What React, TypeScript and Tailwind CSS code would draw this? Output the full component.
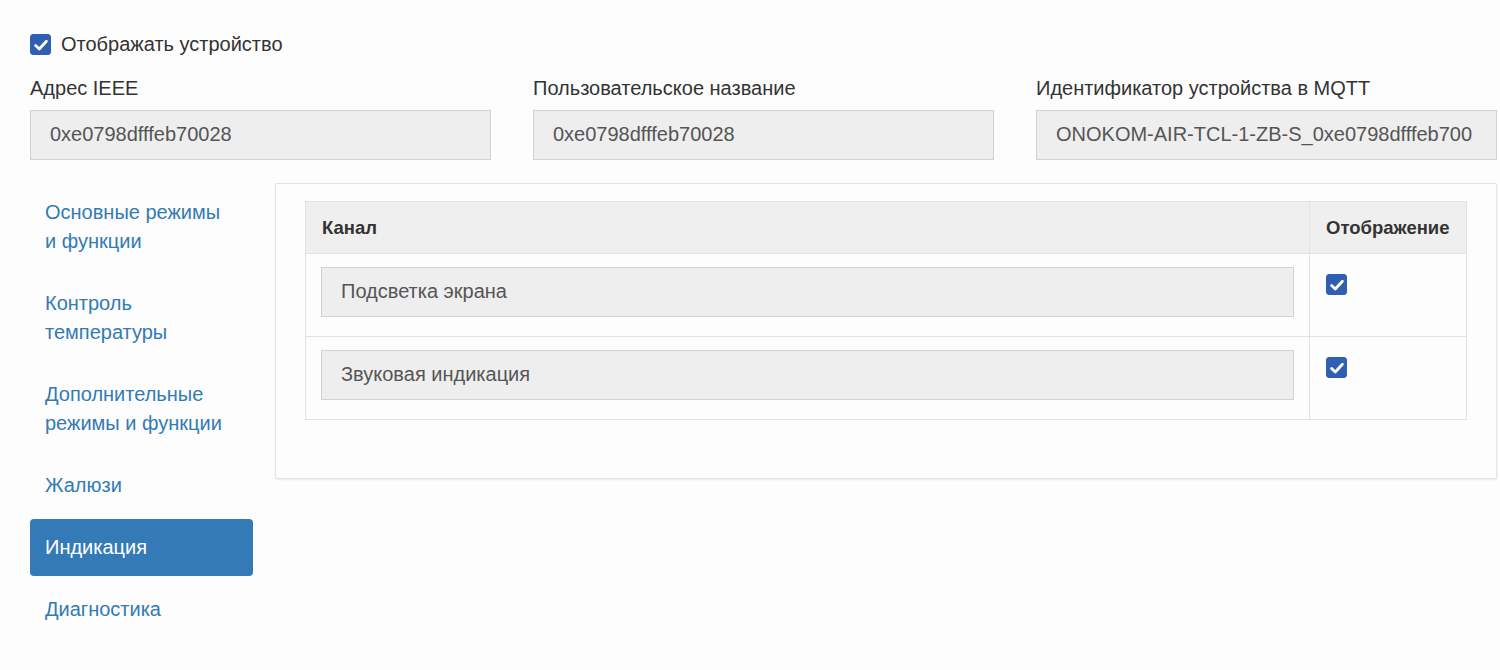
import { useState } from 'react'

const font = { fontFamily: '"Liberation Sans", Arial, sans-serif' }

function Check({ checked, onChange }: { checked: boolean; onChange: () => void }) {
  return (
    <button
      type="button"
      onClick={onChange}
      className={`flex h-[21px] w-[21px] shrink-0 items-center justify-center rounded-[3px] border ${checked ? 'border-[#2e5fb3] bg-[#2e5fb3]' : 'border-[#767676] bg-white'}`}
    >
      {checked && (
        <svg width="16" height="16" viewBox="0 0 16 16" fill="none">
          <path d="M2.6 8.4 6.3 12 13.4 4.2" stroke="white" strokeWidth="2.8" strokeLinecap="round" strokeLinejoin="round" />
        </svg>
      )}
    </button>
  )
}

// the MQTT id is longer than its box; only the visible part is shown, as in the reference
const fields = [
  { label: 'Адрес IEEE', value: '0xe0798dfffeb70028' },
  { label: 'Пользовательское название', value: '0xe0798dfffeb70028' },
  { label: 'Идентификатор устройства в MQTT', value: 'ONOKOM-AIR-TCL-1-ZB-S_0xe0798dfffeb700' },
]

const tabs = [
  'Основные режимы и функции',
  'Контроль температуры',
  'Дополнительные режимы и функции',
  'Жалюзи',
  'Индикация',
  'Диагностика',
]

export default function App() {
  const [visible, setVisible] = useState(true)
  const [active, setActive] = useState(4)
  const [channels, setChannels] = useState([
    { name: 'Подсветка экрана', on: true },
    { name: 'Звуковая индикация', on: true },
  ])

  return (
    <div style={font} className="min-h-[670px] w-[1500px] overflow-hidden bg-[#fdfdfd] pl-[30px] pr-[3px] pt-[30px] text-[20px] leading-[29px] text-[#333]">
      <label className="flex items-center gap-[10px]">
        <Check checked={visible} onChange={() => setVisible(!visible)} />
        <span>Отображать устройство</span>
      </label>

      <div className="mt-[15px] grid grid-cols-3 gap-[42px]">
        {fields.map((f) => (
          <div key={f.label}>
            <div className="mb-[7px] h-[29px]">{f.label}</div>
            <div className="h-[50px] border border-[#d2d2d2] bg-[#eee] px-[19px] py-[9px] text-[#555]">
              <div className="overflow-hidden whitespace-nowrap">{f.value}</div>
            </div>
          </div>
        ))}
      </div>

      <div className="mt-[23px] flex gap-[22px]">
        <ul className="flex w-[223px] shrink-0 flex-col gap-[5px] pt-[1px]">
          {tabs.map((t, i) => (
            <li key={t}>
              <button
                type="button"
                onClick={() => setActive(i)}
                className={`w-full rounded-[4px] px-[15px] py-[14px] text-left ${i === active ? 'bg-[#337ab7] text-white' : 'text-[#337ab7]'}`}
              >
                {t === 'Основные режимы и функции' ? (
                  <>Основные режимы<br />и функции</>
                ) : t === 'Дополнительные режимы и функции' ? (
                  <>Дополнительные<br />режимы и функции</>
                ) : t === 'Контроль температуры' ? (
                  <>Контроль<br />температуры</>
                ) : (
                  t
                )}
              </button>
            </li>
          ))}
        </ul>

        <div className="h-[296px] flex-1 rounded-[2px] border border-[#e3e3e3] bg-[#fdfdfd] px-[29px] pt-[17px] shadow-[0_1px_2px_rgba(0,0,0,0.08)]">
          <table className="w-full table-fixed border-collapse border border-[#e3e3e3]">
            <thead>
              <tr className="bg-[#efefef] text-[18.5px]">
                <th className="h-[52px] border border-[#e3e3e3] px-[16px] text-left font-bold">Канал</th>
                <th className="h-[52px] w-[157px] border border-[#e3e3e3] px-[16px] text-left font-bold whitespace-nowrap">Отображение</th>
              </tr>
            </thead>
            <tbody>
              {channels.map((c, i) => (
                <tr key={c.name}>
                  <td className="h-[83px] border border-[#e3e3e3] px-[15px] align-top pt-[13px]">
                    <div className="h-[50px] border border-[#d2d2d2] bg-[#eee] px-[19px] py-[9px] text-[#555]">{c.name}</div>
                  </td>
                  <td className="border border-[#e3e3e3] px-[16px] pt-[20px] align-top">
                    <Check
                      checked={c.on}
                      onChange={() => setChannels(channels.map((x, j) => (j === i ? { ...x, on: !x.on } : x)))}
                    />
                  </td>
                </tr>
              ))}
            </tbody>
          </table>
        </div>
      </div>
    </div>
  )
}
